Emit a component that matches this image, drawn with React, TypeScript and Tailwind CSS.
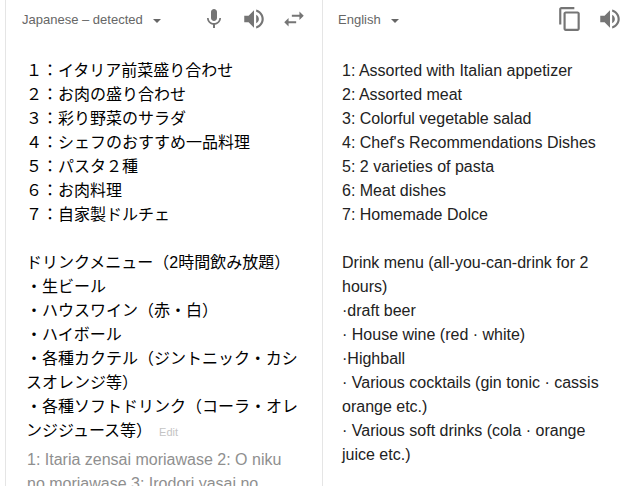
const micPath =
  "M12 14c1.66 0 2.99-1.34 2.99-3L15 5c0-1.66-1.34-3-3-3S9 3.34 9 5v6c0 1.66 1.34 3 3 3zm5.3-3c0 3-2.54 5.1-5.3 5.1S6.7 14 6.7 11H5c0 3.41 2.72 6.23 6 6.72V21h2v-3.28c3.28-.48 6-3.3 6-6.72h-1.7z";
const speakerPath =
  "M3 9v6h4l5 5V4L7 9H3zm13.5 3c0-1.77-1.02-3.29-2.5-4.03v8.05c1.48-.73 2.5-2.25 2.5-4.02zM14 3.23v2.06c2.89.86 5 3.54 5 6.71s-2.11 5.85-5 6.71v2.06c4.01-.91 7-4.49 7-8.77s-2.99-7.86-7-8.77z";
const swapPath =
  "M6.99 11L3 15l3.99 4v-3H14v-2H6.99v-3zM21 9l-3.99-4v3H10v2h7.01v3L21 9z";
const copyPath =
  "M16 1H4c-1.1 0-2 .9-2 2v14h2V3h12V1zm3 4H8c-1.1 0-2 .9-2 2v14c0 1.1.9 2 2 2h11c1.1 0 2-.9 2-2V7c0-1.1-.9-2-2-2zm0 16H8V7h11v14z";

const sourceLines = [
  "１：イタリア前菜盛り合わせ",
  "２：お肉の盛り合わせ",
  "３：彩り野菜のサラダ",
  "４：シェフのおすすめ一品料理",
  "５：パスタ２種",
  "６：お肉料理",
  "７：自家製ドルチェ",
  "",
  "ドリンクメニュー（2時間飲み放題）",
  "・生ビール",
  "・ハウスワイン（赤・白）",
  "・ハイボール",
  "・各種カクテル（ジントニック・カシスオレンジ等）",
];

const targetLines = [
  "1: Assorted with Italian appetizer",
  "2: Assorted meat",
  "3: Colorful vegetable salad",
  "4: Chef's Recommendations Dishes",
  "5: 2 varieties of pasta",
  "6: Meat dishes",
  "7: Homemade Dolce",
  "",
  "Drink menu (all-you-can-drink for 2 hours)",
  "·draft beer",
  "· House wine (red · white)",
  "·Highball",
  "· Various cocktails (gin tonic · cassis orange etc.)",
  "· Various soft drinks (cola · orange juice etc.)",
];

function Icon({ path, size }: { path: string; size: number }) {
  return (
    <svg width={size} height={size} viewBox="0 0 24 24" fill="#757575" className="shrink-0">
      <path d={path} />
    </svg>
  );
}

function Caret() {
  return <span className="ml-[10px] mt-[3px] h-0 w-0 border-x-4 border-t-[4px] border-x-transparent border-t-[#666]" />;
}

function Line({ text }: { text: string }) {
  return <div className="min-h-6">{text}</div>;
}

export default function App() {
  return (
    <div className="h-[486px] w-[630px] overflow-hidden bg-white font-['Liberation_Sans','Noto_Sans_CJK_JP',sans-serif] text-[16px] leading-6">
      <div className="ml-[5px] flex h-full border-l border-[#e5e5e5]">
        <div className="w-[317px] shrink-0 border-r border-[#e5e5e5]">
          <div className="flex h-[38px] items-center pl-4 pr-[15px] text-[13px] text-[#666]">
            <span className="pt-[2px]">Japanese – detected</span>
            <Caret />
            <div className="ml-auto flex items-center gap-[14px]">
              <div className="mr-px">
                <Icon path={micPath} size={24} />
              </div>
              <Icon path={speakerPath} size={26} />
              <Icon path={swapPath} size={26} />
            </div>
          </div>
          <div className="pl-5 pr-4 pt-[21px] text-black">
            {sourceLines.map((line, index) => (
              <Line key={index} text={line} />
            ))}
            <div>
              ・各種ソフトドリンク（コーラ・オレンジジュース等）
              <span className="ml-[7px] text-[11px] text-[#c4c4c4]">Edit</span>
            </div>
            <div className="mt-1 pl-px pr-3 text-[#8f8f8f]">
              1: Itaria zensai moriawase 2: O niku no moriawase 3: Irodori yasai no sarada
            </div>
          </div>
        </div>
        <div className="flex-1">
          <div className="flex h-[38px] items-center pl-[15px] pr-[7px] text-[13px] text-[#666]">
            <span className="pt-[2px]">English</span>
            <Caret />
            <div className="ml-auto flex items-center gap-[14px]">
              <Icon path={copyPath} size={26} />
              <Icon path={speakerPath} size={26} />
            </div>
          </div>
          <div className="pl-[19px] pr-[30px] pt-[21px] text-[#222]">
            {targetLines.map((line, index) => (
              <Line key={index} text={line} />
            ))}
          </div>
        </div>
      </div>
    </div>
  );
}
